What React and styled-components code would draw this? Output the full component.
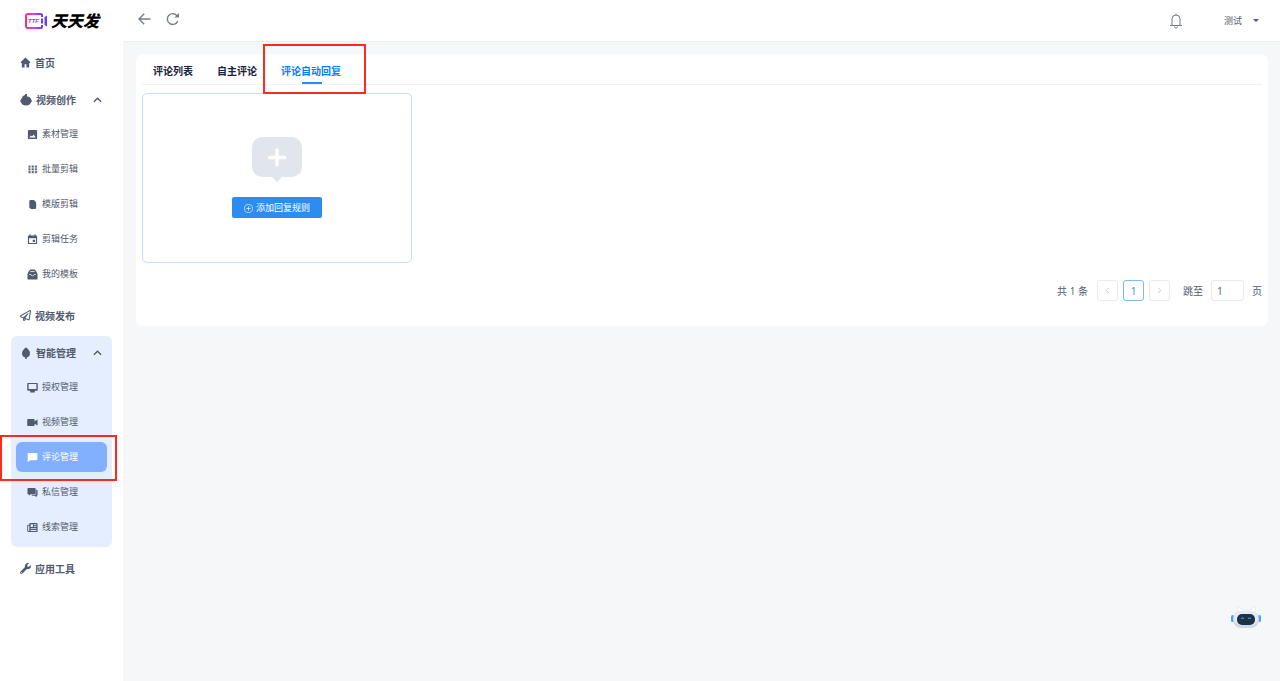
import React, { useState } from 'react';
import styled, { createGlobalStyle, css } from 'styled-components';
import { FaWrench, FaRegPaperPlane } from 'react-icons/fa';

const GlobalStyle = createGlobalStyle`
  * {
    box-sizing: border-box;
  }

  body {
    margin: 0;
    background: #f5f7f9;
    color: #515a6e;
    font-family: "Open Sans", "Noto Sans CJK SC", sans-serif;
    font-size: 10px;
  }

  button, input {
    font: inherit;
    color: inherit;
  }

  button {
    padding: 0;
    border: none;
    background: none;
    cursor: pointer;
  }

  a {
    color: inherit;
    text-decoration: none;
  }
`;

const Icon = ({ children }) => (
  <svg viewBox="0 0 24 24" width="12" height="12" fill="currentColor" aria-hidden="true">
    {children}
  </svg>
);

const HomeIcon = () => (
  <Icon>
    <path d="M12 1l11 10.500-1.500 1.500H20v10h-6v-7h-4v7H4V13H2.500L1 11.500z" />
  </Icon>
);

const BallIcon = () => (
  <Icon>
    <path d="M10 0h4v5c5 .5 8 3 8.500 6.500L24 14l-1.800 2.500C21 20.500 17 23 12 23S3 20.500 2 16.500L0 14l2-3C3 7.500 6 5.500 10 5z" />
    <path d="M4 6l5-4 2 3-5 3z" />
  </Icon>
);

const LeafIcon = () => (
  <Icon>
    <path d="M12 1c4 2.500 8 6.500 8 12 0 4.500-3 7.500-6.500 8V24h-3v-3C7 20.500 4 17.500 4 13 4 7.500 8 3.500 12 1z" />
  </Icon>
);

const ImageIcon = () => (
  <Icon>
    <path
      fillRule="evenodd"
      d="M4 2h16a2 2 0 0 1 2 2v16a2 2 0 0 1-2 2H4a2 2 0 0 1-2-2V4a2 2 0 0 1 2-2zM5 18.500h14L14.500 12 11 16.500 8.500 14z"
    />
  </Icon>
);

const GridIcon = () => (
  <Icon>
    {[3, 9, 15].map((y) => (
      <path key={y} d={`M3 ${y}h5v5H3zM10 ${y}h5v5h-5zM17 ${y}h5v5h-5z`} stroke="#fff" strokeWidth="0.600" />
    ))}
  </Icon>
);

const TemplateIcon = () => (
  <Icon>
    <path d="M8 2h7l5 5v12a3 3 0 0 1-3 3H9l-4-3V5a3 3 0 0 1 3-3z" />
  </Icon>
);

const CalendarIcon = () => (
  <Icon>
    <path
      fillRule="evenodd"
      d="M5 1h3v2h8V1h3v2h1a2 2 0 0 1 2 2v15a2 2 0 0 1-2 2H4a2 2 0 0 1-2-2V5a2 2 0 0 1 2-2h1zM4.500 9v10.500h15V9zM12.500 12.500h5v5h-5z"
    />
  </Icon>
);

const TrayIcon = () => (
  <Icon>
    <path d="M7 1h10l3 4 3 6v10a2 2 0 0 1-2 2H3a2 2 0 0 1-2-2V11l3-6z" />
    <path fill="none" stroke="#fff" strokeWidth="1.600" d="M7 5.500h10M5 12h3.500c.5 4 6.500 4 7 0H19" />
  </Icon>
);

const MonitorIcon = () => (
  <Icon>
    <path
      fillRule="evenodd"
      d="M2 2h20a1.500 1.500 0 0 1 1.500 1.500v14A1.500 1.500 0 0 1 22 19h-5v4H7v-4H2A1.500 1.500 0 0 1 .5 17.500v-14A1.500 1.500 0 0 1 2 2zm1.500 2.500v11h17v-11z"
    />
  </Icon>
);

const CameraIcon = () => (
  <Icon>
    <path d="M2 4.500h13A1.500 1.500 0 0 1 16.500 6v3.500L23 5.500v13l-6.500-4V18a1.500 1.500 0 0 1-1.500 1.500H2A1.500 1.500 0 0 1 .5 18V6A1.500 1.500 0 0 1 2 4.500z" />
  </Icon>
);

const CommentIcon = () => (
  <Icon>
    <path d="M3 2h18a1.500 1.500 0 0 1 1.500 1.500v13A1.500 1.500 0 0 1 21 18H7l-5.500 4V3.500A1.500 1.500 0 0 1 3 2z" />
  </Icon>
);

const MessagesIcon = () => (
  <Icon>
    <path d="M3 2h14a2 2 0 0 1 2 2v10a2 2 0 0 1-2 2H8l-4 3v-3H3a2 2 0 0 1-2-2V4a2 2 0 0 1 2-2z" />
    <path d="M20 6h1a2 2 0 0 1 2 2v9a2 2 0 0 1-2 2v3.500L17 19h-5a2 2 0 0 1-2-2h7.500a2.500 2.500 0 0 0 2.500-2.500z" />
  </Icon>
);

const NewsIcon = () => (
  <Icon>
    <path
      fillRule="evenodd"
      d="M7 2h14a2 2 0 0 1 2 2v16a2 2 0 0 1-2 2H4a3.500 3.500 0 0 1-3.500-3.500V8A2 2 0 0 1 2.500 6H5V4a2 2 0 0 1 2-2zM2.500 8v10.500a1.500 1.500 0 0 0 2.500 1V8zM8 5v6h5V5zM15 5v2h5.500V5zM15 9v2h5.500V9zM8 13.500v2h12.500v-2zM8 17.500v2h12.500v-2z"
    />
  </Icon>
);

const ChevronUp = () => (
  <svg viewBox="0 0 10 6" width="9" height="6" aria-hidden="true">
    <path d="M1 5l4-4 4 4" fill="none" stroke="currentColor" strokeWidth="1.500" />
  </svg>
);

const Arrow = ({ flip }) => (
  <svg viewBox="0 0 6 8" width="5" height="7" aria-hidden="true">
    <path
      d={flip ? 'M1.500 1l3 3-3 3' : 'M4.500 1l-3 3 3 3'}
      fill="none"
      stroke="currentColor"
    />
  </svg>
);

const BackIcon = () => (
  <svg viewBox="0 0 14 14" width="14" height="14" aria-hidden="true">
    <path d="M12.500 7H1.500M6.200 1.700L1 7l5.200 5.300" fill="none" stroke="currentColor" strokeWidth="1.400" />
  </svg>
);

const ReloadIcon = () => (
  <svg viewBox="0 0 14 14" width="14" height="14" aria-hidden="true">
    <path d="M11.800 9A5.400 5.400 0 1 1 11.200 4" fill="none" stroke="currentColor" strokeWidth="1.400" />
    <path d="M13 1v4.600H8.400z" fill="currentColor" />
  </svg>
);

const BellIcon = () => (
  <svg viewBox="0 0 14 16" width="14" height="16" aria-hidden="true">
    <path
      d="M1 12.500h12M3 12.500V6a4 4 0 0 1 8 0v6.500M7 2V.5M5.500 13.500a1.500 1.500 0 0 0 3 0"
      fill="none"
      stroke="currentColor"
    />
  </svg>
);

const LogoMark = () => (
  <svg viewBox="0 0 24 18" width="24" height="18" aria-hidden="true">
    <defs>
      <linearGradient id="brand" x1="0" y1="0" x2="1" y2="0">
        <stop offset="0" stopColor="#ff2d78" />
        <stop offset="0.500" stopColor="#e63be0" />
        <stop offset="1" stopColor="#5b3cf5" />
      </linearGradient>
    </defs>
    <path
      d="M18 5V3.500A1.500 1.500 0 0 0 16.500 2H4a2 2 0 0 0-2 2v10a2 2 0 0 0 2 2h12.500a1.500 1.500 0 0 0 1.500-1.500V13"
      fill="none"
      stroke="url(#brand)"
      strokeWidth="2"
    />
    <path d="M17 6.500h2v5h-2zM20.500 5l2.500-1.500v11L20.500 13z" fill="#6a3cf5" />
    <text
      x="4"
      y="11"
      fill="#d82fc0"
      fontFamily="Liberation Sans, sans-serif"
      fontSize="6"
      fontWeight="700"
      fontStyle="italic"
    >
      TTF
    </text>
  </svg>
);

const Robot = () => (
  <svg viewBox="0 0 32 24" width="32" height="24" aria-hidden="true">
    <path d="M7 9L8 1l5 4h7l5-4 1 8z" fill="#fcfdfe" stroke="#e3e7ee" strokeWidth="0.800" />
    <rect x="1" y="10" width="3" height="7" rx="1.500" fill="#4aa3f7" />
    <rect x="28" y="10" width="3" height="7" rx="1.500" fill="#4aa3f7" />
    <rect x="3" y="6" width="26" height="17" rx="8" fill="#d3d8e5" />
    <rect x="4" y="6" width="24" height="14" rx="7" fill="#e8ebf3" />
    <rect x="7" y="9" width="18" height="11" rx="5" fill="#1d3149" />
    <path d="M11 13.500q1.500-1 3 0M18 13.500q1.500-1 3 0" fill="none" stroke="#4cb4d8" />
  </svg>
);

const sections = [
  { label: '首页', icon: <HomeIcon /> },
  {
    label: '视频创作',
    icon: <BallIcon />,
    items: [
      { label: '素材管理', icon: <ImageIcon /> },
      { label: '批量剪辑', icon: <GridIcon /> },
      { label: '模版剪辑', icon: <TemplateIcon /> },
      { label: '剪辑任务', icon: <CalendarIcon /> },
      { label: '我的模板', icon: <TrayIcon /> },
    ],
  },
  { label: '视频发布', icon: <FaRegPaperPlane /> },
  {
    label: '智能管理',
    icon: <LeafIcon />,
    current: true,
    items: [
      { label: '授权管理', icon: <MonitorIcon /> },
      { label: '视频管理', icon: <CameraIcon /> },
      { label: '评论管理', icon: <CommentIcon />, active: true },
      { label: '私信管理', icon: <MessagesIcon /> },
      { label: '线索管理', icon: <NewsIcon /> },
    ],
  },
  { label: '应用工具', icon: <FaWrench /> },
];

const tabs = ['评论列表', '自主评论', '评论自动回复'];

const App = () => {
  const [activeTab, setActiveTab] = useState('评论自动回复');
  const [page, setPage] = useState('1');

  return (
    <Layout>
      <GlobalStyle />
      <Sidebar>
        <Brand href="#">
          <LogoMark />
          <BrandName>天天发</BrandName>
        </Brand>
        <Menu>
          {sections.map((section) =>
            section.items ? (
              <Group key={section.label} $current={section.current}>
                <GroupTitle type="button" aria-expanded="true">
                  {section.icon}
                  <span>{section.label}</span>
                  <ChevronUp />
                </GroupTitle>
                <SubMenu>
                  {section.items.map((item) => (
                    <SubItem key={item.label} href="#" $active={item.active}>
                      {item.icon}
                      <span>{item.label}</span>
                      {item.active && <MenuMark />}
                    </SubItem>
                  ))}
                </SubMenu>
              </Group>
            ) : (
              <MenuLink key={section.label} href="#">
                {section.icon}
                <span>{section.label}</span>
              </MenuLink>
            )
          )}
        </Menu>
      </Sidebar>

      <Content>
        <Header>
          <HeaderSide>
            <IconButton type="button" aria-label="后退"><BackIcon /></IconButton>
            <IconButton type="button" aria-label="刷新"><ReloadIcon /></IconButton>
          </HeaderSide>
          <UserSide>
            <IconButton type="button" aria-label="通知"><BellIcon /></IconButton>
            <UserButton type="button">
              <span>测试</span>
              <Caret />
            </UserButton>
          </UserSide>
        </Header>

        <Panel>
          <TabBar role="tablist">
            {tabs.map((tab) => (
              <Tab
                key={tab}
                type="button"
                role="tab"
                aria-selected={tab === activeTab}
                $active={tab === activeTab}
                onClick={() => setActiveTab(tab)}
              >
                {tab}
                {tab === activeTab && <TabMark />}
              </Tab>
            ))}
          </TabBar>

          <RuleCard>
            <svg viewBox="0 0 50 45" width="50" height="45" aria-hidden="true">
              <path
                d="M10 0h30a10 10 0 0 1 10 10v20a10 10 0 0 1-10 10h-10l-5 5-5-5H10A10 10 0 0 1 0 30V10A10 10 0 0 1 10 0z"
                fill="#e1e6ec"
              />
              <path d="M25 13v15M17.500 20.500h15" stroke="#fff" strokeWidth="3.500" strokeLinecap="round" />
            </svg>
            <AddButton type="button">
              <svg viewBox="0 0 10 10" width="9" height="9" aria-hidden="true">
                <path d="M5 2.500v5M2.500 5h5" stroke="currentColor" strokeWidth="0.700" />
                <circle cx="5" cy="5" r="4.500" fill="none" stroke="currentColor" strokeWidth="0.700" />
              </svg>
              <span>添加回复规则</span>
            </AddButton>
          </RuleCard>

          <Pagination>
            <Total>共 1 条</Total>
            <Pages>
              <PageButton type="button" aria-label="上一页" disabled><Arrow /></PageButton>
              <PageButton type="button" $active>1</PageButton>
              <PageButton type="button" aria-label="下一页" disabled><Arrow flip /></PageButton>
            </Pages>
            <Jump>
              <span>跳至</span>
              <JumpInput type="text" value={page} onChange={(e) => setPage(e.target.value)} />
              <span>页</span>
            </Jump>
          </Pagination>
        </Panel>
      </Content>

      <Assistant type="button" aria-label="助手"><Robot /></Assistant>
    </Layout>
  );
};

const Layout = styled.div`
  display: flex;
  min-height: 100vh;
`;

const Sidebar = styled.aside`
  flex: 0 0 123px;
  background: #fff;
`;

const Brand = styled.a`
  display: flex;
  align-items: center;
  gap: 3px;
  height: 41px;
  padding-left: 24px;
`;

const BrandName = styled.span`
  color: #000;
  font-size: 16px;
  font-weight: 900;
  font-style: italic;
  line-height: 20px;
`;

const Menu = styled.nav`
  display: flex;
  flex-direction: column;
  gap: 5px;
  padding: 5px 11px;
`;

const titleStyle = css`
  display: flex;
  align-items: center;
  gap: 4px;
  width: 100%;
  height: 32px;
  padding: 1px 10px 0 9px;
  font-size: 10px;
  font-weight: 700;
  line-height: 16px;

  svg {
    flex: none;
  }
`;

const MenuLink = styled.a`
  ${titleStyle}

  > svg {
    width: 11px;
    height: 11px;
  }
`;

const Group = styled.div`
  border-radius: 6px;
  background: ${(props) => (props.$current ? '#e4eeff' : 'transparent')};
`;

const GroupTitle = styled.button`
  ${titleStyle}

  svg:last-child {
    margin-left: auto;
  }
`;

const SubMenu = styled.div`
  display: flex;
  flex-direction: column;
  gap: 5px;
  padding: 4px 5px 5px;
`;

const SubItem = styled.a`
  position: relative;
  display: flex;
  align-items: center;
  gap: 4px;
  height: 30px;
  padding: 0 11px;
  border-radius: 6px;
  background: ${(props) => (props.$active ? '#82afff' : 'transparent')};
  color: ${(props) => (props.$active ? '#fff' : 'inherit')};
  font-size: 9px;
  line-height: 16px;

  svg {
    width: 11px;
    height: 11px;
  }
`;

const Mark = styled.i`
  position: absolute;
  z-index: 2;
  border: 2px solid #ff2a1f;
  pointer-events: none;
`;

const MenuMark = styled(Mark)`
  inset: -7px -10px -9px -16px;
`;

const TabMark = styled(Mark)`
  inset: -10px -12px -10px -7px;
`;

const Content = styled.main`
  flex: 1;
  min-width: 0;
`;

const Header = styled.header`
  display: flex;
  align-items: center;
  justify-content: space-between;
  height: 42px;
  padding: 0 21px 4px 15px;
  border-bottom: 1px solid #eceef1;
  background: #fff;
`;

const HeaderSide = styled.div`
  display: flex;
  align-items: center;
  gap: 14px;
`;

const UserSide = styled(HeaderSide)`
  gap: 41px;
  padding-top: 4px;
`;

const IconButton = styled.button`
  display: flex;
  color: #757d8c;
`;

const UserButton = styled.button`
  display: flex;
  align-items: center;
  gap: 11px;
  font-size: 9px;
  line-height: 16px;
`;

const Caret = styled.i`
  border: 3px solid transparent;
  border-top-color: currentColor;
  border-bottom: none;
`;

const Panel = styled.section`
  margin: 12px 12px 12px 13px;
  padding: 0 6px 25px;
  border-radius: 7px;
  background: #fff;
`;

const TabBar = styled.div`
  display: flex;
  height: 31px;
  border-bottom: 1px solid #f0f1f3;
`;

const Tab = styled.button`
  position: relative;
  padding: 4px 13px 0 11px;
  color: ${(props) => (props.$active ? '#0a7cff' : '#17233d')};
  font-weight: 700;
  line-height: 16px;

  ${(props) =>
    props.$active &&
    css`
      &::after {
        content: '';
        position: absolute;
        bottom: 0;
        left: calc(50% - 10px);
        width: 20px;
        height: 2px;
        background: #2d8cf0;
      }
    `}
`;

const RuleCard = styled.div`
  display: flex;
  flex-direction: column;
  align-items: center;
  gap: 15px;
  width: 270px;
  max-width: 100%;
  height: 170px;
  margin-top: 8px;
  padding-top: 43px;
  border: 1px solid #c3e0fc;
  border-radius: 5px;
`;

const AddButton = styled.button`
  display: flex;
  align-items: center;
  gap: 3px;
  height: 21px;
  padding: 1px 12px 0;
  border-radius: 2px;
  background: #2d8cf0;
  color: #fff;
  font-size: 9px;
  line-height: 16px;
`;

const Pagination = styled.div`
  display: flex;
  align-items: center;
  justify-content: flex-end;
  margin-top: 17px;
  line-height: 16px;
`;

const Total = styled.span`
  margin-right: 9px;
`;

const Pages = styled.div`
  display: flex;
  gap: 5px;
  margin-right: 13px;
`;

const PageButton = styled.button`
  display: flex;
  align-items: center;
  justify-content: center;
  width: 21px;
  height: 21px;
  border: 1px solid ${(props) => (props.$active ? '#7ab8f8' : '#e8eaec')};
  border-radius: 3px;
  background: #fff;
  color: ${(props) => (props.$active ? '#2d8cf0' : '#b4b9c2')};
`;

const Jump = styled.label`
  display: flex;
  align-items: center;
  gap: 8px;
`;

const JumpInput = styled.input`
  width: 33px;
  height: 21px;
  padding: 0 5px;
  border: 1px solid #e8eaec;
  border-radius: 3px;
  background: #fff;
`;

const Assistant = styled.button`
  position: fixed;
  right: 18px;
  bottom: 52px;
  display: flex;
`;

export default App;
